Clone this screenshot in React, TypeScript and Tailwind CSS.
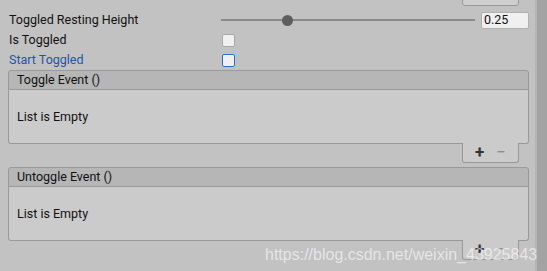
import React from "react"

function EventList({ title }: { title: string }) {
  return (
    <div className="flex flex-col">
      <div className="ml-[8px] mr-[6px] flex h-[20px] items-center rounded-t-[3px] border border-[#999999] bg-[#b6b6b6] px-[8px] text-[12.5px] text-[#111]">
        {title}
      </div>
      <div className="ml-[8px] mr-[6px] flex h-[54px] items-center rounded-b-[3px] border border-t-0 border-[#999999] bg-[#cbcbcb] px-[8px] pt-[1px] text-[12.5px] text-[#111]">
        List is Empty
      </div>
      <div className="mr-[16px] flex justify-end">
        <div className="-mt-[1px] flex h-[20px] w-[57px] items-center justify-around rounded-b-[3px] border border-t-0 border-[#999999] bg-[#cbcbcb] px-[6px]">
          <span className="text-[17px] font-bold leading-none text-[#333]">+</span>
          <span className="text-[17px] leading-none text-[#8a8a8a]">−</span>
        </div>
      </div>
    </div>
  )
}

export default function App() {
  return (
    <div
      className="relative flex h-[271px] w-[547px] overflow-hidden bg-[#c2c2c2]"
      style={{ fontFamily: "Roboto, 'Noto Sans', sans-serif" }}
    >
      <div className="flex flex-1 flex-col">
        <div className="mr-[16px] flex justify-end">
          <div className="-mt-[2px] h-[8px] w-[57px] rounded-[3px] border border-[#999] bg-[#cfcfcf]" />
        </div>
        <div className="mt-[4px] flex h-[20px] items-center">
          <div className="w-[221px] pl-[9px] text-[12.5px] text-[#111]">Toggled Resting Height</div>
          <div className="relative flex h-[12px] w-[254px] items-center">
            <div className="h-[2px] w-full bg-[#8a8a8a]" />
            <div className="absolute left-[61px] h-[11px] w-[11px] rounded-full bg-[#5e5e5e]" />
          </div>
          <div className="ml-[6px] flex h-[17px] w-[48px] items-center rounded-[2px] border border-[#b0b0b0] bg-[#f0f0f0] pl-[2px] text-[12.5px] text-[#111]">
            0.25
          </div>
        </div>
        <div className="flex h-[20px] items-center">
          <div className="w-[222px] pl-[9px] text-[12.5px] text-[#111]">Is Toggled</div>
          <div className="h-[13px] w-[13px] rounded-[2px] border border-[#a8a8a8] bg-[#f0f0f0]" />
        </div>
        <div className="flex h-[20px] items-center">
          <div className="w-[222px] pl-[9px] text-[12.5px] text-[#1e55a8]">Start Toggled</div>
          <div className="h-[13px] w-[13px] rounded-[2px] border border-[#2a6fd4] bg-[#f0f0f0]" />
        </div>
        <EventList title="Toggle Event ()" />
        <div className="h-[4px]" />
        <EventList title="Untoggle Event ()" />
      </div>
      <div className="w-[12px] border-l-2 border-[#b4b4b4] bg-[#a3a3a3]" />
      <div
        className="absolute left-[265px] top-[243px] text-[16px] text-white/60"
        style={{ fontFamily: "'Liberation Sans', Arial, sans-serif" }}
      >
        https://blog.csdn.net/weixin_43925843
      </div>
    </div>
  )
}
